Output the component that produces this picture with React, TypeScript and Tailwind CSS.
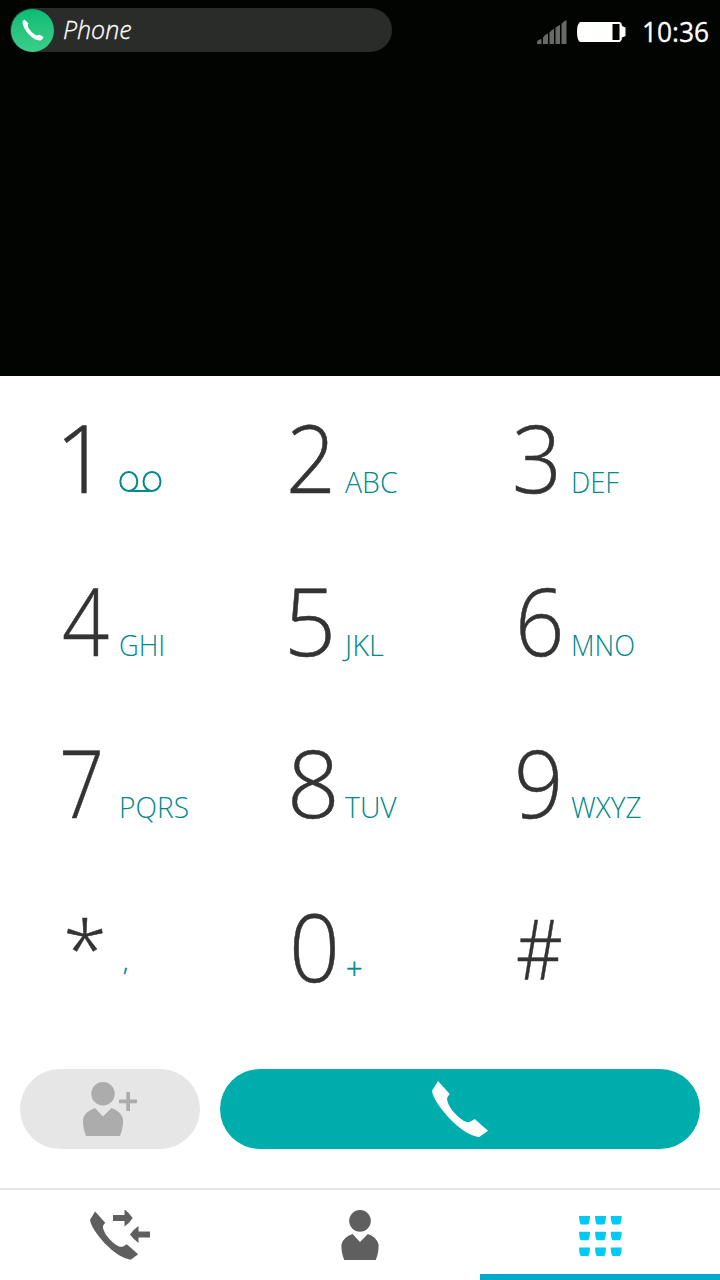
import React from "react";

type Key = { digit: string; letters?: string; digitClass: string; lettersClass?: string };

const keys: Key[] = [
  { digit: "1", digitClass: "ml-[-6px]" },
  { digit: "2", letters: "ABC", digitClass: "ml-[-1px] scale-x-[0.93]", lettersClass: "scale-x-[0.98]" },
  { digit: "3", letters: "DEF", digitClass: "ml-[-1px] scale-x-[0.93]", lettersClass: "scale-x-[0.94]" },
  { digit: "4", letters: "GHI", digitClass: "ml-[1px] scale-x-[0.88]", lettersClass: "scale-x-[0.94]" },
  { digit: "5", letters: "JKL", digitClass: "ml-[-3px] scale-x-[0.97]" },
  { digit: "6", letters: "MNO", digitClass: "ml-[2px] scale-x-[0.92]", lettersClass: "scale-x-[0.94]" },
  { digit: "7", letters: "PQRS", digitClass: "ml-[-2px] scale-x-[0.84]", lettersClass: "scale-x-[0.97]" },
  { digit: "8", letters: "TUV", digitClass: "ml-0 scale-x-[0.98]", lettersClass: "scale-x-[0.98]" },
  { digit: "9", letters: "WXYZ", digitClass: "ml-[1px] scale-x-[0.92]", lettersClass: "scale-x-[0.96]" },
  { digit: "*", letters: ",", digitClass: "text-[80px] translate-x-[2px] translate-y-[-3px]", lettersClass: "text-[24px] translate-x-[4px] translate-y-[-10px] [-webkit-text-stroke:0.5px]" },
  { digit: "0", letters: "+", digitClass: "ml-[2px] scale-x-[0.95] translate-y-px", lettersClass: "translate-x-[1px] translate-y-[-2px] [-webkit-text-stroke:0.5px]" },
  { digit: "#", digitClass: "ml-[3px] text-[83px] scale-x-[0.87] translate-y-[-2px]" },
];

const handset =
  "M6 0 L17.700 13 L15.500 16 Q14.500 18 15.500 20.500 Q17 26 22.500 32 Q29.500 39.500 34.700 41 Q37.500 41.500 39.500 40 L42.700 38 L56 49.700 L47.300 56 Q34 54.500 17 37 Q1 19 0 9.700 Z";

function Handset({ className }: { className: string }) {
  return (
    <svg viewBox="0 0 56 56" className={className} fill="currentColor">
      <path d={handset} />
    </svg>
  );
}

function Person({ className }: { className: string }) {
  return (
    <svg viewBox="0 0 40 54" className={className} fill="currentColor">
      <circle cx="20" cy="11.700" r="11.700" />
      <path d="M12 26 L20 34.500 L28.500 26 Q38 29.500 40 37 Q40.500 46 37 54 H3 Q-0.500 46 0 37 Q2 29.500 12 26 Z" />
    </svg>
  );
}

function Voicemail() {
  return (
    <svg viewBox="0 0 43 22" className="h-[22px] w-[43px]" fill="none" stroke="currentColor" strokeWidth="2">
      <ellipse cx="9.800" cy="10.500" rx="8.500" ry="9.500" />
      <ellipse cx="33" cy="10.500" rx="8.500" ry="9.500" />
      <path d="M10 20 H33" />
    </svg>
  );
}

function StatusBar() {
  return (
    <header className="flex h-[60px] items-start justify-between bg-[#020402] pl-[10px] pr-[10px] pt-2 text-white">
      <div className="flex h-11 w-[382px] items-center rounded-full bg-[#2a2c2a]">
        <div className="ml-px flex size-[43px] items-center justify-center rounded-full bg-gradient-to-b from-[#04bd72] to-[#3acd8b]">
          <svg viewBox="0 0 22 22" className="size-[22px]" fill="currentColor">
            <path d="M2.500 0.500 L6.500 4.500 Q5 6 6.500 9 Q9 13.500 13.500 16 Q15.500 17 17 15.500 L21.500 18 Q21 20.500 18.500 21.500 Q13 22 6.500 15 Q1 9 0.500 3.500 Q0.500 1 2.500 0.500Z" />
          </svg>
        </div>
        <span className="ml-[9px] text-[25px] font-light italic leading-[43px] -translate-y-px [-webkit-text-stroke:0.3px]">Phone</span>
      </div>
      <div className="flex h-11 items-center">
        <svg viewBox="0 0 30 24" className="mt-[3px] h-6 w-[30px]" fill="#676967">
          <path d="M0 24 V21.500 Q2 19 4.500 19 V24Z M6 24 V17.500 Q8 14 11 13.500 V24Z M12.500 24 V12.500 Q14.500 9.500 17 9 V24Z M18.500 24 V8 Q20.500 5.500 23 5 V24Z M24.500 24 V4 Q26.500 1 29.500 0 V24Z" />
        </svg>
        <svg viewBox="0 0 49 20" className="ml-[10px] mt-[3px] h-5 w-[49px]">
          <path d="M3 0 H43 Q45 1 45 4 L48.500 5.500 V14 L45 15.500 Q45 19 43 20 H3 Q0 18 0 10 Q0 2 3 0Z" fill="white" />
          <path d="M35.500 2 H42.500 V18 H35.500Z" fill="#020402" />
        </svg>
        <span className="ml-4 w-[68px] origin-left translate-y-px scale-x-[0.94] whitespace-nowrap text-[28px] leading-[46px] [-webkit-text-stroke:0.3px]">10:36</span>
      </div>
    </header>
  );
}

function DialKey({ item }: { item: Key }) {
  return (
    <button className="flex items-baseline text-left leading-[162.5px]">
      <span className="w-[58px] text-[94px] font-light text-[#333] [-webkit-text-stroke:0.5px]">
        <span className={`inline-block origin-left ${item.digitClass}`}>{item.digit}</span>
      </span>
      <span className={`inline-block origin-left whitespace-nowrap font-light text-[#008a8a] ${item.digit === "*" ? "" : "text-[29px]"} ${item.lettersClass ?? ""}`}>
        {item.digit === "1" ? <Voicemail /> : item.letters}
      </span>
    </button>
  );
}

export default function App() {
  return (
    <main className="flex h-[1280px] w-[720px] flex-col overflow-hidden bg-white font-['Open_Sans',sans-serif]">
      <StatusBar />
      <div className="h-[316px] shrink-0 bg-[#020402]" />
      <section className="grid h-[650px] shrink-0 grid-cols-[226px_226px_226px] grid-rows-4 pl-[61px]">
        {keys.map((item) => (
          <DialKey key={item.digit} item={item} />
        ))}
      </section>
      <section className="mt-[43px] flex h-20 shrink-0 gap-5 px-5">
        <button className="flex w-[180px] items-center justify-center rounded-full bg-[#e6e6e6] text-[#acacac]">
          <Person className="h-[54px] w-10" />
          <svg viewBox="0 0 18 19" className="mb-[15px] ml-[-4px] h-[19px] w-[18px]" fill="currentColor">
            <path d="M7.300 0 H11 V7.500 H18 V11.200 H11 V19 H7.300 V11.200 H0 V7.500 H7.300Z" />
          </svg>
        </button>
        <button className="flex flex-1 items-center justify-center rounded-full bg-[#00adad] text-white">
          <Handset className="size-14" />
        </button>
      </section>
      <nav className="mt-[39px] grid h-[92px] shrink-0 grid-cols-3 border-t-2 border-[#e6e6e6] text-[#5f5f5f]">
        <button className="flex justify-center pt-5">
          <svg viewBox="0 0 60 50" className="h-[50px] w-[60px]" fill="currentColor">
            <path transform="translate(0 1.500) scale(.86)" d={handset} />
            <path d="M23 5 H34.500 V-0.500 Q39 2.500 42.700 8 Q39 13.500 34.500 16.500 V11 H23Z M60 21.500 H48.500 V16 Q44 19 40 24.500 Q44 30 48.500 33 V27.500 H60Z" />
          </svg>
        </button>
        <button className="flex justify-center pt-5">
          <Person className="h-[50px] w-[38px]" />
        </button>
        <button className="flex flex-col items-center justify-between pt-[26px] text-[#00caf5]">
          <svg viewBox="0 0 43 40" className="h-10 w-[43px]" fill="currentColor">
            {[0, 15.700, 31.400].map((y) =>
              [0, 16, 31.700].map((x) => (
                <path key={`${x}-${y}`} transform={`translate(${x} ${y})`} d="M0 0 H11 Q11 5 9.800 7.500 Q9.500 8.500 8.500 8.500 H2.500 Q1.500 8.500 1.200 7.500 Q0 5 0 0Z" />
              ))
            )}
          </svg>
          <span className="h-[6px] w-full bg-[#00aacc]" />
        </button>
      </nav>
    </main>
  );
}
